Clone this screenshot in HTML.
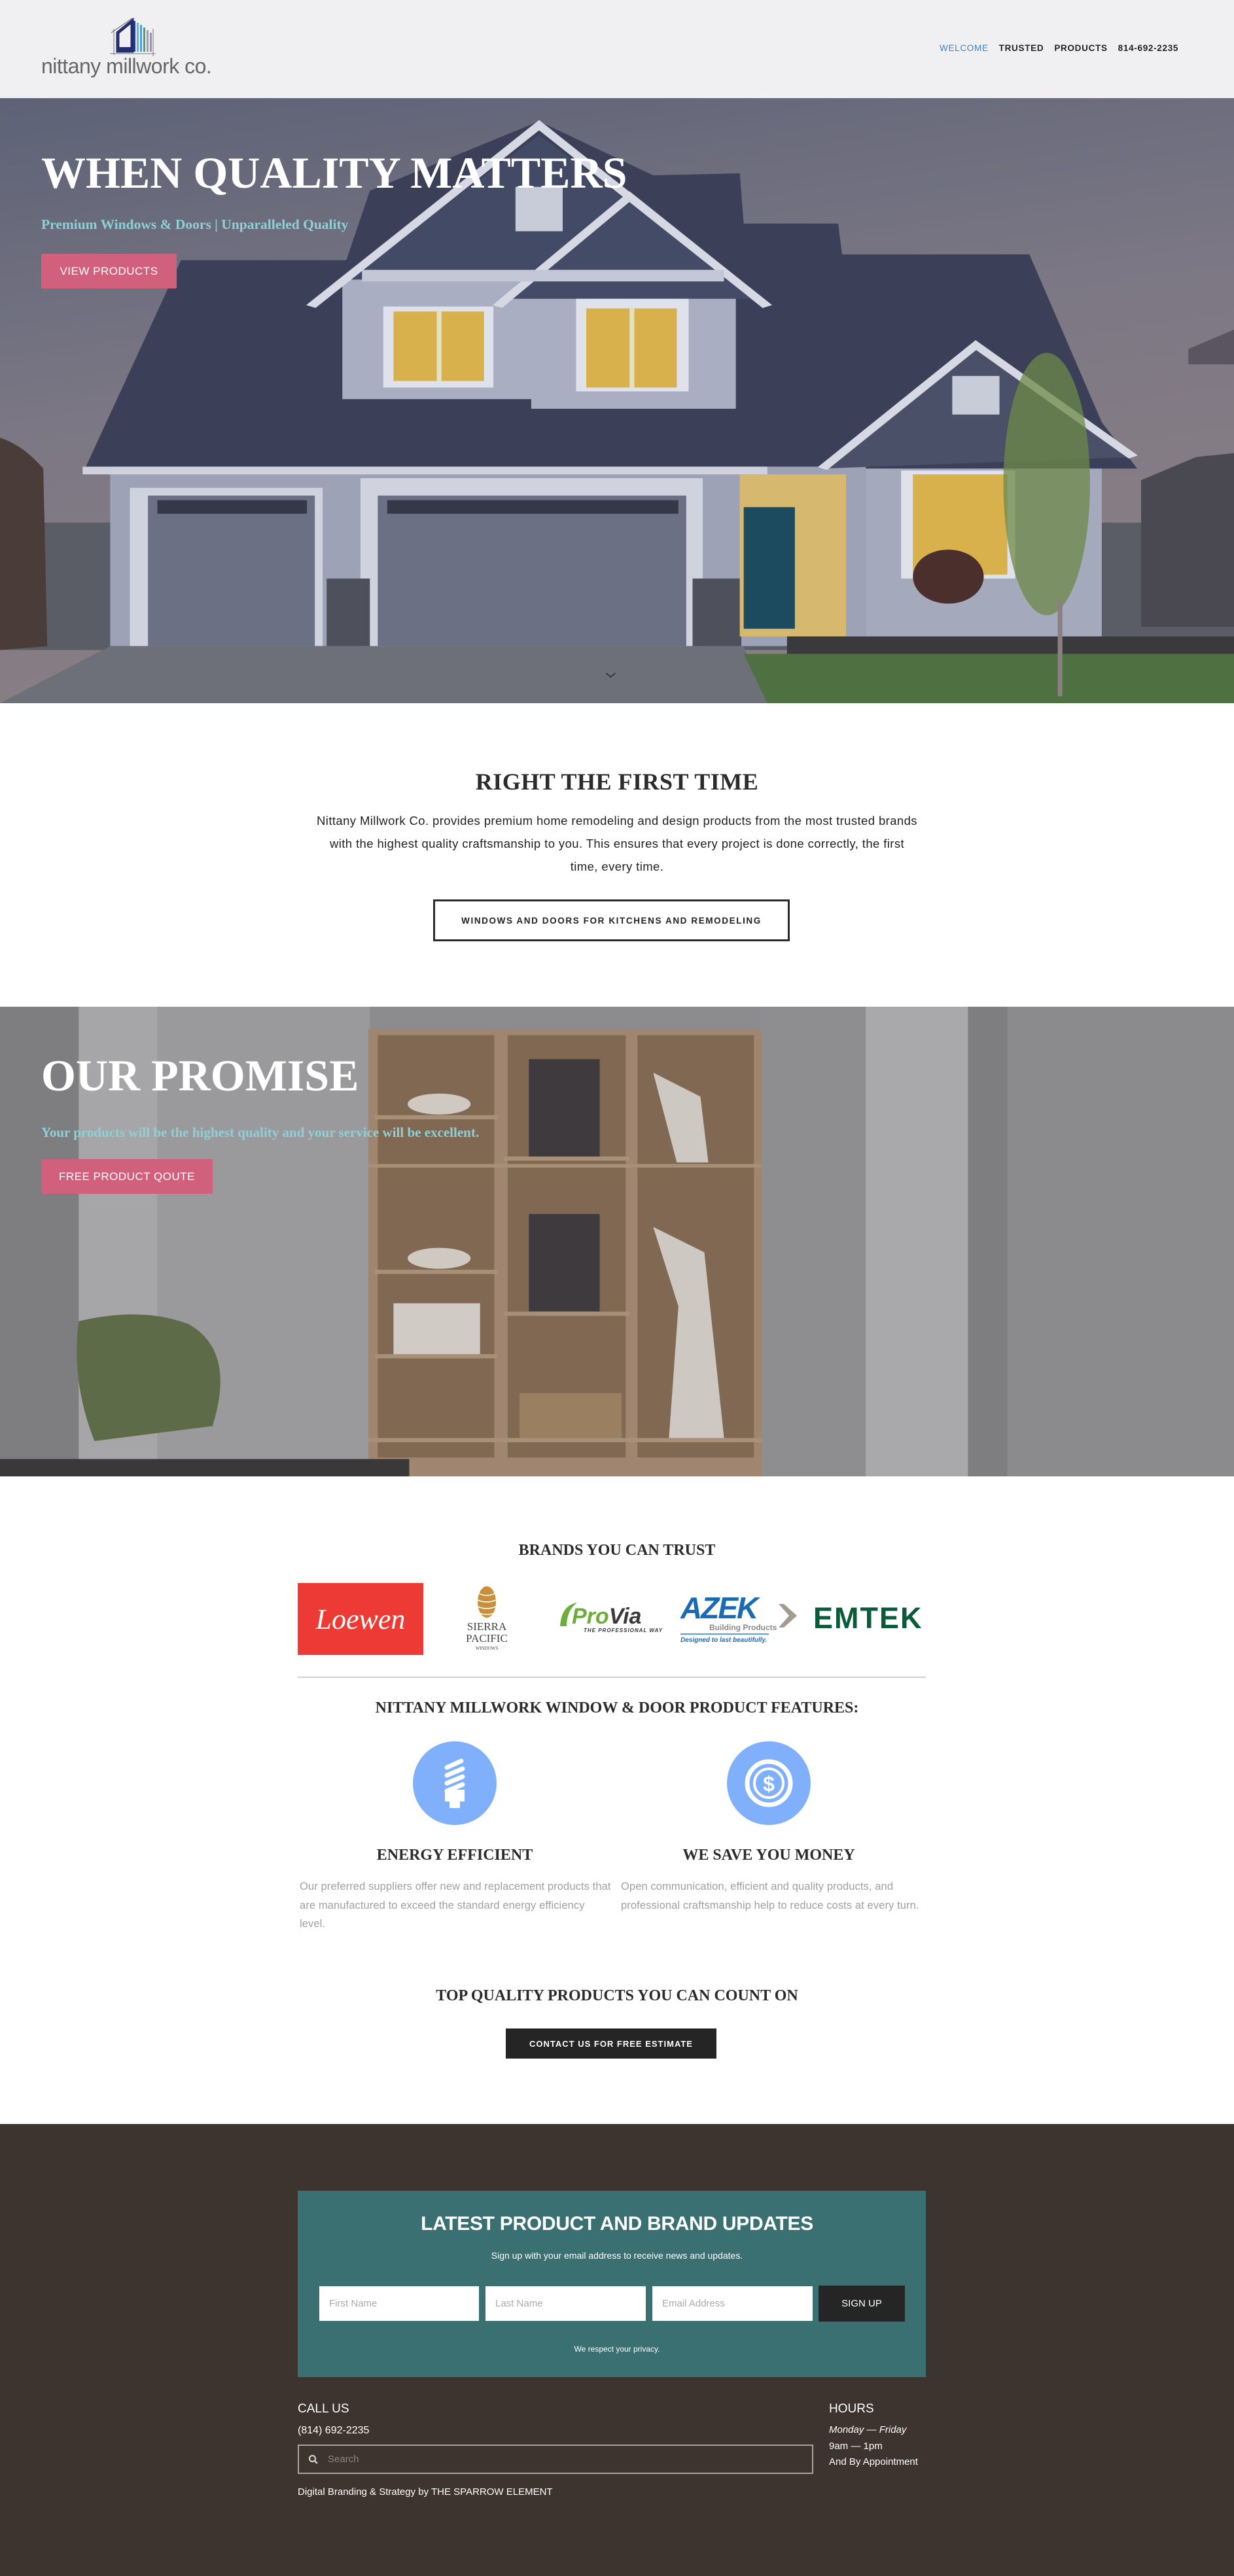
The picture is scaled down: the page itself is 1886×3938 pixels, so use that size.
<!DOCTYPE html>
<html><head><meta charset="utf-8">
<style>
*{margin:0;padding:0;box-sizing:border-box}
body{width:1886px;height:3938px;position:relative;background:#fff;font-family:"Liberation Sans",sans-serif;overflow:hidden}
.abs{position:absolute}
.serif{font-family:"Liberation Serif",serif;font-weight:bold}
.nav a{color:#222;text-decoration:none;margin-left:16px}
.btnp{background:#d0607c;color:#fff;font-size:17px;display:flex;align-items:center;justify-content:center;border-radius:2px;letter-spacing:.5px}
.ctr{text-align:center;left:0;width:1886px}
.inp{background:#fff;color:#aaa;font-size:15px;display:flex;align-items:center;padding-left:15px}
.ft{color:#fff}
</style></head><body>

<!-- header -->
<div class="abs" style="left:0;top:0;width:1886px;height:150px;background:#f0f0f2"></div>
<svg class="abs" style="left:168px;top:24px" width="72" height="66" viewBox="0 0 72 66">
<line x1="2" y1="26" x2="34" y2="4" stroke="#555" stroke-width="1"/>
<line x1="6" y1="20" x2="6" y2="60" stroke="#777" stroke-width="1"/>
<line x1="66" y1="20" x2="66" y2="62" stroke="#777" stroke-width="1"/>
<line x1="0" y1="58" x2="70" y2="58" stroke="#777" stroke-width="1"/>
<path d="M12 54 V26 L34 8 V54 Z" fill="none" stroke="#24306e" stroke-width="5"/>
<rect x="12" y="48" width="22" height="7" fill="#24306e"/>
<rect x="36" y="8" width="3" height="47" fill="#2a3a8a"/>
<rect x="41" y="11" width="3" height="44" fill="#58b8e8"/>
<rect x="46" y="14" width="3" height="41" fill="#4aa0d8"/>
<rect x="51" y="18" width="3" height="37" fill="#5a9a6a"/>
<rect x="56" y="22" width="3" height="33" fill="#9aa0b0"/>
<rect x="61" y="26" width="3" height="29" fill="#9890b8"/>
</svg>
<div class="abs" style="left:63px;top:83px;font-size:32px;color:#666;letter-spacing:-0.5px">nittany millwork co.</div>
<div class="abs nav" style="left:1420px;top:66px;font-size:13.5px;letter-spacing:.7px;font-weight:bold;white-space:nowrap"><a style="color:#3f80c4;font-weight:normal">WELCOME</a><a>TRUSTED</a><a>PRODUCTS</a><a>814-692-2235</a></div>

<!-- hero -->
<svg class="abs" style="left:0;top:150px" width="1886" height="925" viewBox="0 0 1568 1568" preserveAspectRatio="none">
<defs><linearGradient id="sky" x1="0" y1="0" x2="0.3" y2="1"><stop offset="0" stop-color="#5d6276"/><stop offset="0.5" stop-color="#7b7784"/><stop offset="1" stop-color="#8a7f84"/></linearGradient></defs>
<rect width="1568" height="1568" fill="url(#sky)"/>
<rect x="0" y="1100" width="1568" height="330" fill="#5a5c66"/>
<path d="M0 880 Q30 900 55 960 L60 1420 L0 1430 Z" fill="#4a3c38"/>
<path d="M1450 990 L1520 930 L1568 920 L1568 1370 L1450 1370 Z" fill="#4a4850"/>
<path d="M1510 650 L1568 600 L1568 690 L1510 690 Z" fill="#5a5560"/>
<polygon points="108,960 230,420 440,420 470,240 685,60 830,200 940,195 945,325 1065,325 1070,405 1308,405 1400,840 1445,960" fill="#3b3f57"/>
<rect x="435" y="470" width="245" height="310" fill="#a9aec3"/>
<rect x="675" y="500" width="260" height="305" fill="#a9aec3"/>
<polygon points="440,470 685,95 930,470" fill="#434a66"/>
<polyline points="395,540 685,70 975,540" fill="none" stroke="#d6d9e4" stroke-width="14"/>
<rect x="655" y="230" width="60" height="115" fill="#c8ccd8"/>
<polygon points="650,520 800,270 955,520" fill="#444b67"/>
<polyline points="632,540 800,255 975,540" fill="none" stroke="#d6d9e4" stroke-width="14"/>
<rect x="460" y="445" width="460" height="30" fill="#c4c8d6"/>
<rect x="487" y="540" width="140" height="210" fill="#dfe2ea"/><rect x="500" y="553" width="115" height="180" fill="#d8b04c"/><rect x="555" y="553" width="6" height="180" fill="#e6e1c0"/>
<rect x="732" y="520" width="143" height="240" fill="#dfe2ea"/><rect x="745" y="545" width="115" height="205" fill="#d8b04c"/><rect x="800" y="545" width="6" height="205" fill="#e6e1c0"/>
<rect x="140" y="955" width="960" height="465" fill="#9da2b7"/>
<rect x="105" y="955" width="870" height="20" fill="#cfd2dc"/>
<rect x="165" y="1010" width="245" height="410" fill="#d0d3dd"/>
<rect x="188" y="1030" width="212" height="390" fill="#6c7085"/>
<rect x="458" y="985" width="435" height="435" fill="#d0d3dd"/>
<rect x="480" y="1030" width="392" height="390" fill="#6c7085"/>
<rect x="200" y="1042" width="190" height="35" fill="#353848"/><rect x="492" y="1042" width="370" height="35" fill="#353848"/>
<rect x="415" y="1245" width="55" height="175" fill="#4e505c"/><rect x="880" y="1245" width="62" height="175" fill="#4e505c"/>
<rect x="940" y="975" width="135" height="420" fill="#d6b96e"/>
<rect x="945" y="1060" width="65" height="315" fill="#1c4a5e"/>
<polygon points="1045,960 1240,630 1440,930" fill="#4a5068"/>
<polyline points="1045,960 1240,640 1440,930" fill="none" stroke="#d6d9e4" stroke-width="14"/>
<rect x="1100" y="960" width="300" height="440" fill="#a4a9bc"/>
<rect x="1145" y="965" width="145" height="280" fill="#dfe2ea"/><rect x="1160" y="975" width="120" height="260" fill="#d8b04c"/>
<rect x="1210" y="720" width="60" height="100" fill="#c8ccd8"/>
<polygon points="0,1568 140,1420 945,1420 975,1568" fill="#6d6f79"/>
<polygon points="945,1440 1568,1440 1568,1568 975,1568" fill="#4f7040"/>
<rect x="1000" y="1395" width="568" height="45" fill="#3a3a3c"/>
<ellipse cx="1330" cy="1000" rx="55" ry="340" fill="#6d8a48" opacity=".75"/>
<rect x="1344" y="1300" width="6" height="250" fill="#8a8080"/>
<ellipse cx="1205" cy="1240" rx="45" ry="70" fill="#4a2f2c"/>
<polyline points="770,1490 776,1500 782,1490" fill="none" stroke="#333" stroke-width="2"/>
</svg>
<div class="abs serif" style="left:63px;top:225px;font-size:68px;color:#fff;white-space:nowrap">WHEN QUALITY MATTERS</div>
<div class="abs serif" style="left:63px;top:331px;font-size:21.5px;color:#8fd0d6;white-space:nowrap">Premium Windows &amp; Doors | Unparalleled Quality</div>
<div class="abs btnp" style="left:63px;top:388px;width:207px;height:53px">VIEW PRODUCTS</div>

<!-- right first time -->
<div class="abs serif ctr" style="top:1174px;font-size:36px;color:#2b2b2b;letter-spacing:.5px">RIGHT THE FIRST TIME</div>
<div class="abs ctr" style="top:1237px;font-size:18.5px;letter-spacing:.4px;line-height:35px;color:#222;white-space:nowrap">Nittany Millwork Co. provides premium home remodeling and design products from the most trusted brands<br>with the highest quality craftsmanship to you. This ensures that every project is done correctly, the first<br>time, every time.</div>
<div class="abs" style="left:662px;top:1375px;width:545px;height:64px;border:3px solid #2a2a2a;display:flex;align-items:center;justify-content:center;font-size:13.5px;letter-spacing:1.6px;font-weight:bold;color:#222">WINDOWS AND DOORS FOR KITCHENS AND REMODELING</div>

<!-- promise -->
<svg class="abs" style="left:0;top:1539px" width="1886" height="718" viewBox="0 0 1568 1568" preserveAspectRatio="none">
<rect width="1568" height="1568" fill="#8c8c8f"/>
<rect x="0" y="0" width="100" height="1568" fill="#7e7e81"/>
<rect x="100" y="0" width="100" height="1568" fill="#a6a6a9"/>
<rect x="200" y="0" width="270" height="1568" fill="#9a9a9d"/>
<rect x="965" y="0" width="135" height="1568" fill="#8e8e91"/>
<rect x="1100" y="0" width="130" height="1568" fill="#a9a9ac"/>
<rect x="1230" y="0" width="50" height="1568" fill="#7e7e81"/>
<rect x="1280" y="0" width="288" height="1568" fill="#8b8b8e"/>
<rect x="468" y="75" width="500" height="1493" fill="#a08670"/>
<rect x="480" y="95" width="148" height="1410" fill="#806853"/>
<rect x="645" y="95" width="150" height="1410" fill="#806853"/>
<rect x="810" y="95" width="148" height="1410" fill="#806853"/>
<g fill="#a89078"><rect x="476" y="362" width="156" height="14"/><rect x="476" y="878" width="156" height="14"/><rect x="476" y="1160" width="156" height="14"/><rect x="640" y="500" width="160" height="14"/><rect x="640" y="1018" width="160" height="14"/><rect x="468" y="525" width="500" height="12"/><rect x="468" y="1440" width="500" height="14"/></g>
<rect x="672" y="175" width="90" height="325" fill="#3e3a3e"/><rect x="672" y="692" width="90" height="325" fill="#3e3a3e"/>
<path d="M830 220 L890 300 L900 520 L860 520 Z" fill="#cdc8c2"/>
<path d="M830 735 L895 820 L920 1440 L850 1440 L862 1000 Z" fill="#cdc8c2"/>
<ellipse cx="558" cy="325" rx="40" ry="35" fill="#cfc9c2"/><ellipse cx="558" cy="840" rx="40" ry="35" fill="#cfc9c2"/>
<rect x="500" y="990" width="110" height="170" fill="#d0cbc5"/>
<rect x="660" y="1290" width="130" height="150" fill="#9a8060"/>
<path d="M100 1050 Q180 1000 240 1060 Q300 1150 270 1400 L120 1450 Q90 1250 100 1050 Z" fill="#5e6b48"/>
<rect x="0" y="1510" width="520" height="58" fill="#3a3838"/>
</svg>
<div class="abs serif" style="left:63px;top:1605px;font-size:68px;color:#fff;white-space:nowrap">OUR PROMISE</div>
<div class="abs serif" style="left:63px;top:1719px;font-size:21px;color:#8fd0d6;white-space:nowrap">Your products will be the highest quality and your service will be excellent.</div>
<div class="abs btnp" style="left:63px;top:1772px;width:262px;height:53px">FREE PRODUCT QOUTE</div>

<!-- brands -->
<div class="abs serif ctr" style="top:2357px;font-size:24px;color:#2b2b2b">BRANDS YOU CAN TRUST</div>
<div class="abs" style="left:455px;top:2420px;width:192px;height:110px;background:#ee3a34;display:flex;align-items:center;justify-content:center;color:#fff;font-family:'Liberation Serif',serif;font-style:italic;font-size:44px">Loewen</div>
<svg class="abs" style="left:708px;top:2424px" width="72" height="104" viewBox="0 0 72 104">
<ellipse cx="36" cy="25" rx="14" ry="24" fill="#c8903a"/>
<g stroke="#fff" stroke-width="1.5" fill="none"><path d="M24 12 Q36 18 48 12"/><path d="M22 22 Q36 28 50 22"/><path d="M22 32 Q36 38 50 32"/><path d="M24 42 Q36 46 48 42"/></g>
<text x="36" y="68" font-family="Liberation Serif" font-size="17" text-anchor="middle" fill="#444">SIERRA</text>
<text x="36" y="86" font-family="Liberation Serif" font-size="17" text-anchor="middle" fill="#444">PACIFIC</text>
<text x="36" y="98" font-family="Liberation Serif" font-size="7" text-anchor="middle" fill="#444">WINDOWS</text>
</svg>
<svg class="abs" style="left:852px;top:2448px" width="168" height="52" viewBox="0 0 168 52">
<path d="M4 38 Q6 6 30 2 Q14 14 14 38 Z" fill="#6cae3a"/>
<text x="22" y="34" font-family="Liberation Sans" font-weight="bold" font-style="italic" font-size="34" fill="#6cae3a">Pro<tspan fill="#3a3a3a">Via</tspan></text>
<text x="40" y="47" font-family="Liberation Sans" font-weight="bold" font-style="italic" font-size="8" fill="#333" letter-spacing="1">THE PROFESSIONAL WAY</text>
</svg>
<svg class="abs" style="left:1040px;top:2434px" width="182" height="80" viewBox="0 0 182 80">
<text x="0" y="40" font-family="Liberation Sans" font-weight="bold" font-style="italic" font-size="46" fill="#1a6bb5" letter-spacing="-2">AZEK</text>
<path d="M150 18 L166 36 L150 54 L158 54 L178 36 L158 18 Z" fill="#a39a92"/>
<text x="44" y="58" font-family="Liberation Sans" font-weight="bold" font-size="12" fill="#8a8a8a">Building Products</text>
<line x1="0" y1="64" x2="135" y2="64" stroke="#5aa0d8" stroke-width="2"/>
<text x="0" y="76" font-family="Liberation Sans" font-weight="bold" font-style="italic" font-size="10" fill="#1a6bb5">Designed to last beautifully.</text>
</svg>
<div class="abs" style="left:1243px;top:2448px;font-size:45px;font-weight:bold;color:#0b5a3a;letter-spacing:2px">EMTEK</div>
<div class="abs" style="left:455px;top:2563px;width:960px;height:2px;background:#cfcfcf"></div>
<div class="abs serif ctr" style="top:2598px;font-size:24px;color:#2b2b2b">NITTANY MILLWORK WINDOW &amp; DOOR PRODUCT FEATURES:</div>
<svg class="abs" style="left:631px;top:2662px" width="128" height="128" viewBox="0 0 128 128">
<circle cx="64" cy="64" r="64" fill="#80b0fb"/>
<g stroke="#fff" stroke-width="7" stroke-linecap="round" fill="none"><path d="M52 40 L74 30"/><path d="M52 52 L76 42"/><path d="M52 64 L76 54"/><path d="M52 76 L76 66"/></g>
<path d="M49 74 H79 V92 H72 V102 H56 V92 H49 Z" fill="#fff"/>
</svg>
<svg class="abs" style="left:1111px;top:2662px" width="128" height="128" viewBox="0 0 128 128">
<circle cx="64" cy="64" r="64" fill="#80b0fb"/>
<circle cx="64" cy="64" r="33" fill="none" stroke="#fff" stroke-width="7"/>
<circle cx="64" cy="64" r="22" fill="none" stroke="#fff" stroke-width="4"/>
<text x="64" y="76" text-anchor="middle" font-family="Liberation Sans" font-weight="bold" font-size="32" fill="#fff">$</text>
</svg>
<div class="abs serif" style="left:455px;width:480px;top:2823px;text-align:center;font-size:24px;color:#2b2b2b">ENERGY EFFICIENT</div>
<div class="abs serif" style="left:935px;width:480px;top:2823px;text-align:center;font-size:24px;color:#2b2b2b">WE SAVE YOU MONEY</div>
<div class="abs" style="left:458px;top:2870px;font-size:16.5px;letter-spacing:.1px;line-height:28.5px;color:#a0a0a0;white-space:nowrap">Our preferred suppliers offer new and replacement products that<br>are manufactured to exceed the standard energy efficiency<br>level.</div>
<div class="abs" style="left:949px;top:2870px;font-size:16.5px;letter-spacing:.1px;line-height:28.5px;color:#a0a0a0;white-space:nowrap">Open communication, efficient and quality products, and<br>professional craftsmanship help to reduce costs at every turn.</div>
<div class="abs serif ctr" style="top:3038px;font-size:24px;color:#2b2b2b">TOP QUALITY PRODUCTS YOU CAN COUNT ON</div>
<div class="abs" style="left:773px;top:3101px;width:322px;height:46px;background:#252525;color:#fff;font-size:13px;font-weight:bold;letter-spacing:1px;display:flex;align-items:center;justify-content:center">CONTACT US FOR FREE ESTIMATE</div>

<!-- footer -->
<div class="abs" style="left:0;top:3247px;width:1886px;height:691px;background:#3d3430"></div>
<div class="abs" style="left:455px;top:3349px;width:960px;height:285px;background:#3b7073"></div>
<div class="abs ctr" style="top:3383px;font-size:30px;font-weight:bold;color:#fff;letter-spacing:-.3px">LATEST PRODUCT AND BRAND UPDATES</div>
<div class="abs ctr" style="top:3440px;font-size:14px;color:#fff">Sign up with your email address to receive news and updates.</div>
<div class="abs inp" style="left:488px;top:3495px;width:244px;height:53px">First Name</div>
<div class="abs inp" style="left:742px;top:3495px;width:245px;height:53px">Last Name</div>
<div class="abs inp" style="left:997px;top:3495px;width:245px;height:53px">Email Address</div>
<div class="abs" style="left:1251px;top:3494px;width:132px;height:55px;background:#252525;color:#fff;font-size:15px;display:flex;align-items:center;justify-content:center">SIGN UP</div>
<div class="abs ctr" style="top:3584px;font-size:12px;color:#fff">We respect your privacy.</div>
<div class="abs ft" style="left:455px;top:3672px;font-size:19px">CALL US</div>
<div class="abs ft" style="left:455px;top:3707px;font-size:16px">(814) 692-2235</div>
<div class="abs" style="left:455px;top:3737px;width:788px;height:45px;border:2px solid #aaa39e;color:#8a8480;font-size:15px;display:flex;align-items:center;padding-left:14px"><svg width="16" height="16" viewBox="0 0 16 16" style="margin-right:14px"><circle cx="6.5" cy="6.5" r="4.5" fill="none" stroke="#ccc" stroke-width="2.2"/><line x1="10" y1="10" x2="14" y2="14" stroke="#ccc" stroke-width="2.5"/></svg>Search</div>
<div class="abs ft" style="left:455px;top:3801px;font-size:15px">Digital Branding &amp; Strategy by THE SPARROW ELEMENT</div>
<div class="abs ft" style="left:1267px;top:3672px;font-size:19px">HOURS</div>
<div class="abs ft" style="left:1267px;top:3706px;font-size:15px;font-style:italic">Monday — Friday</div>
<div class="abs ft" style="left:1267px;top:3731px;font-size:15px">9am — 1pm</div>
<div class="abs ft" style="left:1267px;top:3755px;font-size:15px">And By Appointment</div>
</body></html>
